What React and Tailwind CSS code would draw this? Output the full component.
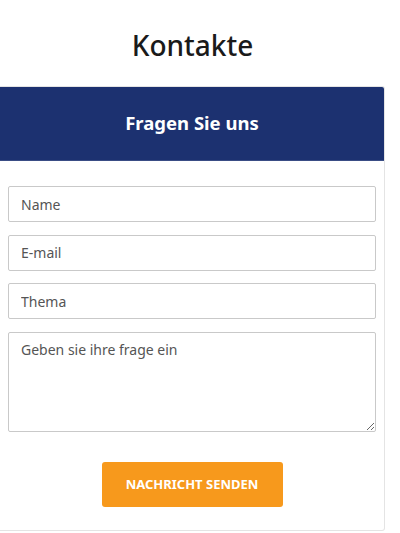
export default function App() {
  const font = { fontFamily: '"Noto Sans", "Open Sans", sans-serif' };
  return (
    <div className="w-[400px] min-h-[533px] bg-white" style={font}>
      <div className="w-[385px]">
        <h1 className="pt-[26px] text-center text-[28px] leading-[38px] text-[#1a1a1a] font-medium">
          Kontakte
        </h1>
        <div className="mt-[22px] border-y border-r border-[#e4e4e4] rounded-r-[3px] overflow-hidden">
          <div className="h-[74px] bg-[#1c3170] flex items-center justify-center border-b border-[#3a4d85]">
            <span className="text-white text-[18.5px] font-bold leading-none">Fragen Sie uns</span>
          </div>
          <form className="px-2 pt-[25px] pb-[23px] flex flex-col gap-[12.5px]" onSubmit={(e) => e.preventDefault()}>
            <input
              className="h-[36px] w-full border border-[#c9c9c9] rounded-[2px] pl-3 text-[14px] text-[#444] placeholder:text-[#555] outline-none"
              placeholder="Name"
            />
            <input
              className="h-[36px] w-full border border-[#c9c9c9] rounded-[2px] pl-3 text-[14px] text-[#444] placeholder:text-[#555] outline-none"
              placeholder="E-mail"
            />
            <input
              className="h-[36px] w-full border border-[#c9c9c9] rounded-[2px] pl-3 text-[14px] text-[#444] placeholder:text-[#555] outline-none"
              placeholder="Thema"
            />
            <textarea
              className="h-[100px] w-full border border-[#c9c9c9] rounded-[2px] pl-3 pt-[6px] text-[14px] text-[#444] placeholder:text-[#555] outline-none"
              placeholder="Geben sie ihre frage ein"
            />
            <div className="flex justify-center mt-[18px]">
              <button
                type="submit"
                className="w-[181px] h-[45px] bg-[#f7991c] rounded-[3px] text-white text-[13px] font-bold"
              >
                NACHRICHT SENDEN
              </button>
            </div>
          </form>
        </div>
      </div>
    </div>
  );
}
